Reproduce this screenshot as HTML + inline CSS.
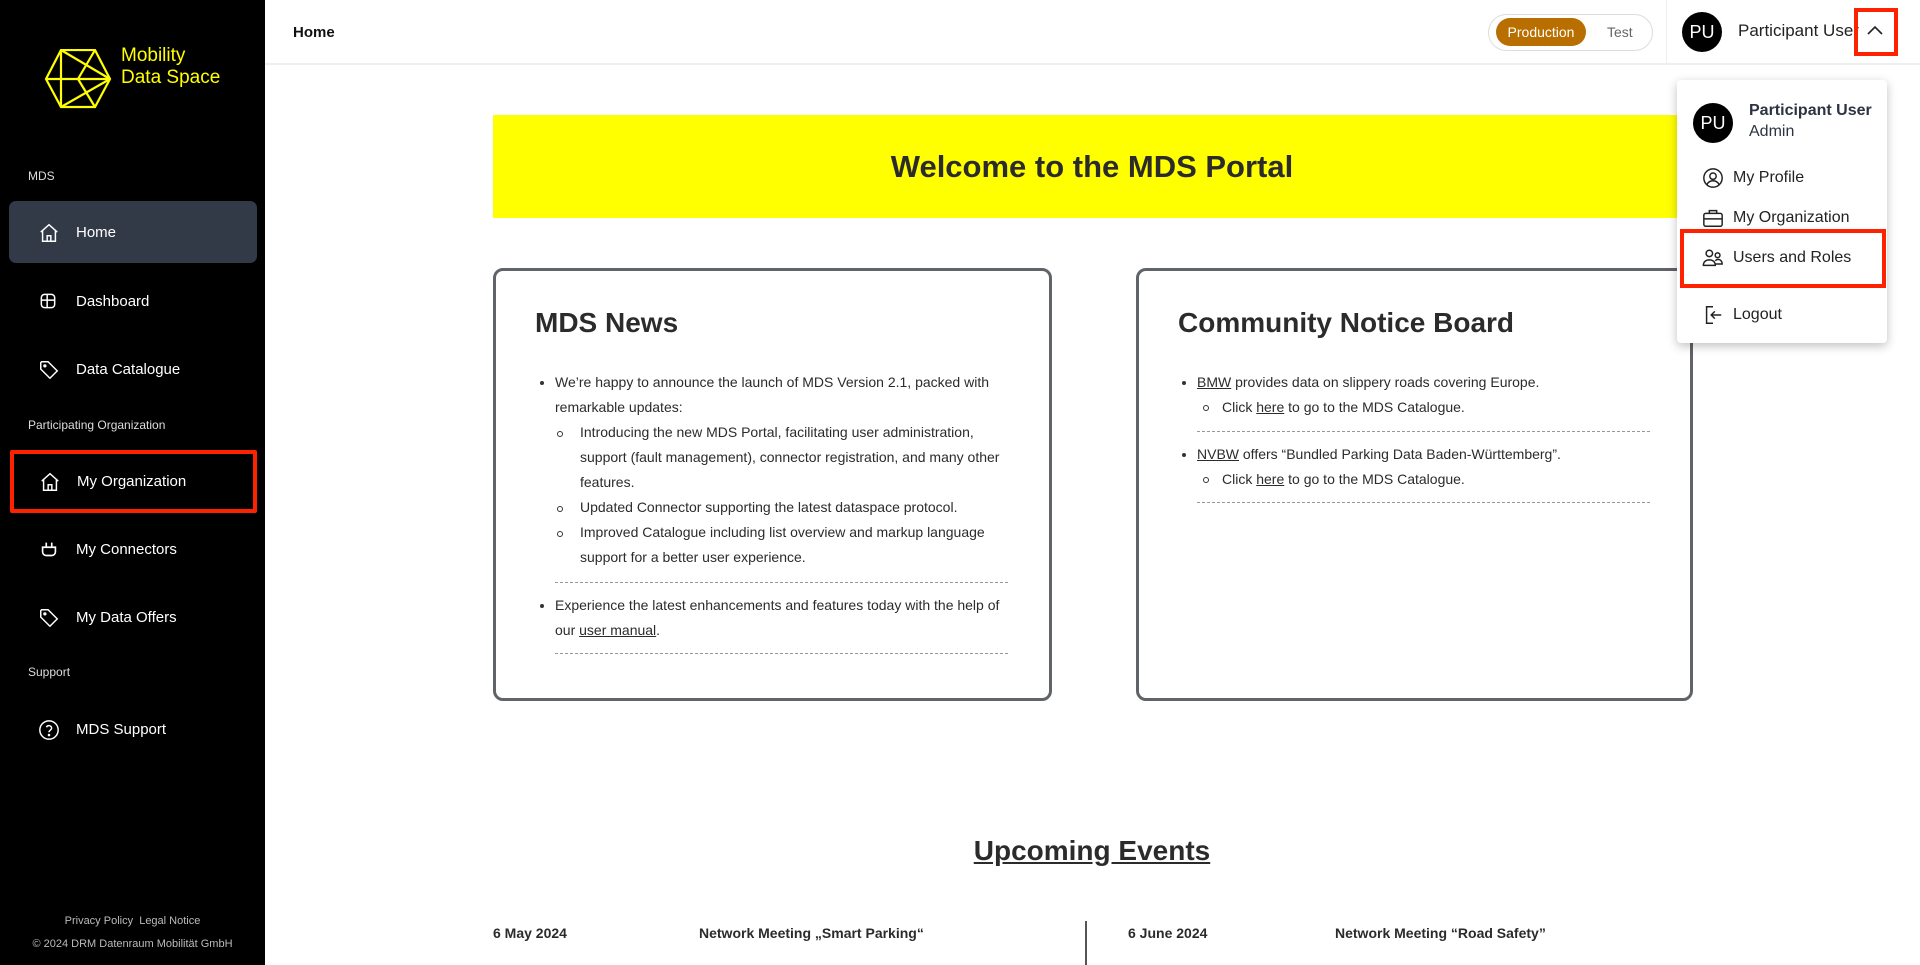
<!DOCTYPE html>
<html><head><meta charset="utf-8"><style>
*{margin:0;padding:0;box-sizing:border-box}
body{width:1920px;height:965px;overflow:hidden;background:#fff;font-family:"Liberation Sans",Arial,sans-serif;color:#2b2b2b;position:relative}
.a{position:absolute;white-space:nowrap}
#sb{position:absolute;left:0;top:0;width:265px;height:965px;background:#000}
.lab{position:absolute;left:28px;font-size:12px;color:#ddd}
.it{position:absolute;left:9px;width:248px;height:62px;border-radius:7px;color:#fff;font-size:15px}
.it svg{position:absolute;left:29px;top:21px}
.it span{position:absolute;left:67px;top:23px}
.news{position:absolute;border:3px solid #606368;border-radius:10px;background:#fff}
.news h2{position:absolute;font-size:28px;font-weight:bold;color:#2b2b2b}
.tx{position:absolute;font-size:14px;line-height:25px;color:#2b2b2b;white-space:nowrap}
.dash{position:absolute;border-top:1px dashed #999;height:0}
.dot{position:absolute;width:4px;height:4px;border-radius:50%;background:#333}
.cir{position:absolute;width:6px;height:6px;border-radius:50%;border:1px solid #333}
u{text-decoration:underline}
.dd{position:absolute;font-size:16px;color:#222}
</style></head><body>
<div id="sb">
<svg class="a" style="left:44px;top:49px" width="68" height="60" viewBox="0 0 68 60" fill="none" stroke="#ffff00" stroke-width="2.2">
<polygon points="17,1 51,1 66,30 51,58 17,58 2,30"/>
<line x1="2" y1="30" x2="66" y2="30"/><line x1="17" y1="1" x2="66" y2="30"/><line x1="17" y1="1" x2="17" y2="58"/>
<line x1="51" y1="1" x2="34" y2="30"/><line x1="34" y1="30" x2="51" y2="58"/><line x1="17" y1="58" x2="66" y2="30"/>
</svg>
<div class="a" style="left:121px;top:45px;font-size:19px;line-height:22px;color:#ffff00">Mobility<br>Data Space</div>
<div class="lab" style="top:169px">MDS</div>
<div class="it" style="top:201px;background:#323a48"><svg width="22" height="22" viewBox="0 0 24 24" fill="none" stroke="#fff" stroke-width="1.6"><path d="M3 11L12 3l9 8M5 9v12h14V9M10 21v-6h4v6"/></svg><span>Home</span></div>
<div class="it" style="top:270px"><svg width="20" height="20" viewBox="0 0 24 24" fill="none" stroke="#fff" stroke-width="1.8"><rect x="4" y="4" width="16" height="16" rx="4"/><path d="M4 11h16M11 11v9M11 4v7"/></svg><span>Dashboard</span></div>
<div class="it" style="top:338px"><svg width="22" height="22" viewBox="0 0 24 24" fill="none" stroke="#fff" stroke-width="1.6"><path d="M3 4v7l10 10 8-8L11 3H4z"/><circle cx="7.5" cy="7.5" r="1"/></svg><span>Data Catalogue</span></div>
<div class="lab" style="top:418px">Participating Organization</div>
<div class="it" style="top:450px;border:4px solid #ff2200;left:10px;height:63px;width:247px;border-radius:2px"><svg style="left:25px;top:17px" width="22" height="22" viewBox="0 0 24 24" fill="none" stroke="#fff" stroke-width="1.6"><path d="M3 11L12 3l9 8M5 9v12h14V9M10 21v-6h4v6"/></svg><span style="left:63px;top:19px">My Organization</span></div>
<div class="it" style="top:518px"><svg width="22" height="22" viewBox="0 0 24 24" fill="none" stroke="#fff" stroke-width="1.8"><path d="M5 9h14v5a4 4 0 0 1-4 4H9a4 4 0 0 1-4-4zM9 9V4M15 9V4"/></svg><span>My Connectors</span></div>
<div class="it" style="top:586px"><svg width="22" height="22" viewBox="0 0 24 24" fill="none" stroke="#fff" stroke-width="1.6"><path d="M3 4v7l10 10 8-8L11 3H4z"/><circle cx="7.5" cy="7.5" r="1"/></svg><span>My Data Offers</span></div>
<div class="lab" style="top:665px">Support</div>
<div class="it" style="top:698px"><svg width="22" height="22" viewBox="0 0 24 24" fill="none" stroke="#fff" stroke-width="1.6"><circle cx="12" cy="12" r="10"/><path d="M9.2 9a3 3 0 0 1 5.7 1c0 2-3 2.5-3 4.5"/><circle cx="12" cy="17.5" r=".6" fill="#fff"/></svg><span>MDS Support</span></div>
<div class="a" style="left:0;width:265px;text-align:center;top:915px;font-size:11px;color:#bbb">Privacy Policy&nbsp; Legal Notice</div>
<div class="a" style="left:0;width:265px;text-align:center;top:938px;font-size:11px;color:#bbb">© 2024 DRM Datenraum Mobilität GmbH</div>
</div>

<div class="a" style="left:265px;top:63px;width:1655px;border-top:2px solid #eee"></div>
<div class="a" style="left:293px;top:24px;font-size:15px;font-weight:bold;color:#111">Home</div>
<div class="a" style="left:1488px;top:14px;width:165px;height:37px;border:1px solid #ddd;border-radius:19px"></div>
<div class="a" style="left:1496px;top:18px;width:90px;height:28px;border-radius:14px;background:#b86f00;color:#fff;font-size:14px;text-align:center;line-height:28px">Production</div>
<div class="a" style="left:1607px;top:24px;font-size:14px;color:#666">Test</div>
<div class="a" style="left:1666px;top:0;height:63px;border-left:1px solid #eee"></div>
<div class="a" style="left:1682px;top:12px;width:40px;height:40px;border-radius:50%;background:#000;color:#fff;font-size:18px;text-align:center;line-height:40px">PU</div>
<div class="a" style="left:1738px;top:21px;font-size:17px;color:#222">Participant User</div>
<div class="a" style="left:1854px;top:8px;width:44px;height:48px;border:4px solid #ff2200"></div>
<svg class="a" style="left:1866px;top:24px" width="18" height="12" viewBox="0 0 18 12" fill="none" stroke="#222" stroke-width="1.6"><path d="M2 10l7-7 7 7"/></svg>

<div class="a" style="left:493px;top:115px;width:1198px;height:103px;background:#ffff00"></div>
<div class="a" style="left:493px;top:149px;width:1198px;text-align:center;font-size:31px;font-weight:bold;color:#2b2b2b">Welcome to the MDS Portal</div>

<div class="news" style="left:493px;top:268px;width:559px;height:433px">
<h2 style="left:39px;top:36px">MDS News</h2>
</div>
<div class="dot" style="left:540px;top:381px"></div>
<div class="tx" style="left:555px;top:370px">We’re happy to announce the launch of MDS Version 2.1, packed with<br>remarkable updates:</div>
<div class="cir" style="left:557px;top:431px"></div>
<div class="tx" style="left:580px;top:420px">Introducing the new MDS Portal, facilitating user administration,<br>support (fault management), connector registration, and many other<br>features.</div>
<div class="cir" style="left:557px;top:506px"></div>
<div class="tx" style="left:580px;top:495px">Updated Connector supporting the latest dataspace protocol.</div>
<div class="cir" style="left:557px;top:531px"></div>
<div class="tx" style="left:580px;top:520px">Improved Catalogue including list overview and markup language<br>support for a better user experience.</div>
<div class="dash" style="left:555px;top:582px;width:453px"></div>
<div class="dot" style="left:540px;top:604px"></div>
<div class="tx" style="left:555px;top:593px">Experience the latest enhancements and features today with the help of<br>our <u>user manual</u>.</div>
<div class="dash" style="left:555px;top:653px;width:453px"></div>

<div class="news" style="left:1136px;top:268px;width:557px;height:433px">
<h2 style="left:39px;top:36px">Community Notice Board</h2>
</div>
<div class="dot" style="left:1182px;top:381px"></div>
<div class="tx" style="left:1197px;top:370px"><u>BMW</u> provides data on slippery roads covering Europe.</div>
<div class="cir" style="left:1203px;top:405px"></div>
<div class="tx" style="left:1222px;top:395px">Click <u>here</u> to go to the MDS Catalogue.</div>
<div class="dash" style="left:1197px;top:431px;width:453px"></div>
<div class="dot" style="left:1182px;top:453px"></div>
<div class="tx" style="left:1197px;top:442px"><u>NVBW</u> offers “Bundled Parking Data Baden-Württemberg”.</div>
<div class="cir" style="left:1203px;top:477px"></div>
<div class="tx" style="left:1222px;top:467px">Click <u>here</u> to go to the MDS Catalogue.</div>
<div class="dash" style="left:1197px;top:502px;width:453px"></div>

<div class="a" style="left:493px;top:835px;width:1198px;text-align:center;font-size:28px;font-weight:bold;text-decoration:underline;color:#2b2b2b">Upcoming Events</div>
<div class="a" style="left:493px;top:925px;font-size:14px;font-weight:bold">6 May 2024</div>
<div class="a" style="left:699px;top:925px;font-size:14px;font-weight:bold">Network Meeting „Smart Parking“</div>
<div class="a" style="left:1085px;top:921px;height:44px;border-left:2px solid #555"></div>
<div class="a" style="left:1128px;top:925px;font-size:14px;font-weight:bold">6 June 2024</div>
<div class="a" style="left:1335px;top:925px;font-size:14px;font-weight:bold">Network Meeting “Road Safety”</div>

<div class="a" style="left:1677px;top:80px;width:210px;height:263px;background:#fff;border-radius:4px;box-shadow:0 3px 10px rgba(0,0,0,.25)"></div>
<div class="a" style="left:1693px;top:103px;width:40px;height:40px;border-radius:50%;background:#000;color:#fff;font-size:18px;text-align:center;line-height:40px">PU</div>
<div class="a" style="left:1749px;top:102px;font-size:16px;font-weight:bold;color:#2d3340">Participant User</div>
<div class="a" style="left:1749px;top:123px;font-size:16px;color:#2d3340">Admin</div>
<svg class="a" style="left:1702px;top:167px" width="22" height="22" viewBox="0 0 24 24" fill="none" stroke="#222" stroke-width="1.6"><circle cx="12" cy="12" r="10"/><circle cx="12" cy="10" r="3.5"/><path d="M5.5 19c1.5-3 4-4 6.5-4s5 1 6.5 4"/></svg>
<div class="dd" style="left:1733px;top:169px">My Profile</div>
<svg class="a" style="left:1702px;top:207px" width="22" height="22" viewBox="0 0 24 24" fill="none" stroke="#222" stroke-width="1.6"><rect x="2" y="7" width="20" height="14" rx="2"/><path d="M8 7V4h8v3M2 13h20"/></svg>
<div class="dd" style="left:1733px;top:209px">My Organization</div>
<div class="a" style="left:1680px;top:229px;width:206px;height:59px;border:4px solid #ff2200"></div>
<svg class="a" style="left:1702px;top:247px" width="22" height="22" viewBox="0 0 24 24" fill="none" stroke="#222" stroke-width="1.6"><circle cx="8" cy="7" r="3.5"/><circle cx="17" cy="9" r="2.6"/><path d="M1.5 20c0-4 3-6 6.5-6s6.5 2 6.5 6zM14.5 15c1-1 2-1.5 3-1.5 2.5 0 4.5 2 4.5 5h-7"/></svg>
<div class="dd" style="left:1733px;top:249px">Users and Roles</div>
<svg class="a" style="left:1702px;top:304px" width="22" height="22" viewBox="0 0 24 24" fill="none" stroke="#222" stroke-width="1.6"><path d="M12 3H5v18h7M10 12h11M14 8l-4 4 4 4"/></svg>
<div class="dd" style="left:1733px;top:306px">Logout</div>
</body></html>
